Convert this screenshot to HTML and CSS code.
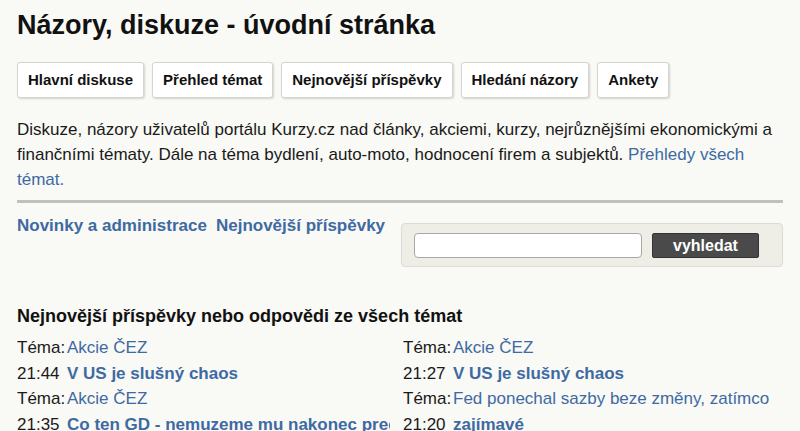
FILE: index.html
```html
<!DOCTYPE html>
<html lang="cs">
<head>
    <meta charset="UTF-8">
    <meta name="viewport" content="width=device-width, initial-scale=1.0">
    <title>Názory, diskuze - úvodní stránka</title>
    <link rel="stylesheet" href="styles.css">
</head>
<body>
    <div class="page">
        <h1>Názory, diskuze - úvodní stránka</h1>

        <!-- Menu -->
        <div class="menu">
            <a href="#" class="menu-btn">Hlavní diskuse</a>
            <a href="#" class="menu-btn">Přehled témat</a>
            <a href="#" class="menu-btn">Nejnovější příspěvky</a>
            <a href="#" class="menu-btn">Hledání názory</a>
            <a href="#" class="menu-btn">Ankety</a>
        </div>

        <p class="intro">
            Diskuze, názory uživatelů portálu Kurzy.cz nad články, akciemi, kurzy, nejrůznějšími ekonomickými a
            finančními tématy. Dále na téma bydlení, auto-moto, hodnocení firem a subjektů. <a href="#">Přehledy všech témat.</a>
        </p>

        <div class="toolbar">
            <div class="toolbar-links">
                <a href="#">Novinky a administrace</a>
                <a href="#">Nejnovější příspěvky</a>
            </div>
            <form class="search">
                <input type="text" name="q">
                <button type="submit">vyhledat</button>
            </form>
        </div>

        <!-- Nejnovější příspěvky -->
        <h2>Nejnovější příspěvky nebo odpovědi ze všech témat</h2>
        <div class="posts">
            <div class="post">
                <div class="row"><span class="lbl">Téma:</span><a href="#">Akcie ČEZ</a></div>
                <div class="row"><span class="lbl">21:44</span><a href="#" class="title">V US je slušný chaos</a></div>
                <div class="row"><span class="lbl">Téma:</span><a href="#">Akcie ČEZ</a></div>
                <div class="row"><span class="lbl">21:35</span><a href="#" class="title">Co ten GD - nemuzeme mu nakonec predat</a></div>
            </div>
            <div class="post">
                <div class="row"><span class="lbl">Téma:</span><a href="#">Akcie ČEZ</a></div>
                <div class="row"><span class="lbl">21:27</span><a href="#" class="title">V US je slušný chaos</a></div>
                <div class="row"><span class="lbl">Téma:</span><a href="#">Fed ponechal sazby beze změny, zatímco</a></div>
                <div class="row"><span class="lbl">21:20</span><a href="#" class="title">zajímavé</a></div>
            </div>
        </div>
    </div>
</body>
</html>
```

FILE: styles.css
```css
body {
    margin: 0;
    background-color: #f9f9f5;
    font-family: "Liberation Sans", Arial, sans-serif;
    color: #1a1a1a;
}

a {
    color: #3e6aa3;
    text-decoration: none;
}

.page {
    width: 766px;
    padding: 0 17px;
}

h1 {
    font-size: 27px;
    line-height: 30px;
    margin: 10px 0 22px;
    color: #111;
}

.menu {
    display: flex;
    gap: 8px;
}

.menu-btn {
    display: block;
    padding: 0 10px;
    height: 34px;
    line-height: 34px;
    background-color: #fff;
    border: 1px solid #d4d4d0;
    border-radius: 3px;
    box-shadow: 1px 1px 2px rgba(0, 0, 0, 0.15);
    color: #111;
    font-weight: bold;
    font-size: 15px;
}

.intro {
    font-size: 17px;
    line-height: 25px;
    margin: 19px 0 0;
    padding-bottom: 8px;
    border-bottom: 3px solid #c0c0c0;
}

.toolbar {
    display: flex;
    justify-content: space-between;
    align-items: flex-start;
    margin-top: 13px;
}

.toolbar-links {
    display: flex;
    gap: 9px;
    font-weight: bold;
    font-size: 17px;
    line-height: 20px;
}

.search {
    display: flex;
    gap: 10px;
    width: 356px;
    margin-top: 7px;
    padding: 9px 12px 8px;
    background-color: #eeeee6;
    border: 1px solid #dcdcd4;
    border-radius: 4px;
}

.search input {
    width: 228px;
    height: 25px;
    box-sizing: border-box;
    border: 1px solid #a8a8a8;
    border-radius: 4px;
    background-color: #fff;
}

.search button {
    width: 107px;
    height: 25px;
    border: 1px solid #333;
    border-radius: 2px;
    background-color: #4a4a4a;
    color: #fff;
    font-family: "Liberation Sans", Arial, sans-serif;
    font-weight: bold;
    font-size: 16px;
}

h2 {
    font-size: 18px;
    line-height: 21px;
    margin: 39px 0 8px;
    color: #111;
}

.posts {
    display: grid;
    grid-template-columns: 373px 373px;
    column-gap: 13px;
}

.row {
    font-size: 17px;
    line-height: 25.5px;
    white-space: nowrap;
    overflow: hidden;
}

.lbl {
    display: inline-block;
    width: 50px;
}

.row .title {
    font-weight: bold;
}
```
